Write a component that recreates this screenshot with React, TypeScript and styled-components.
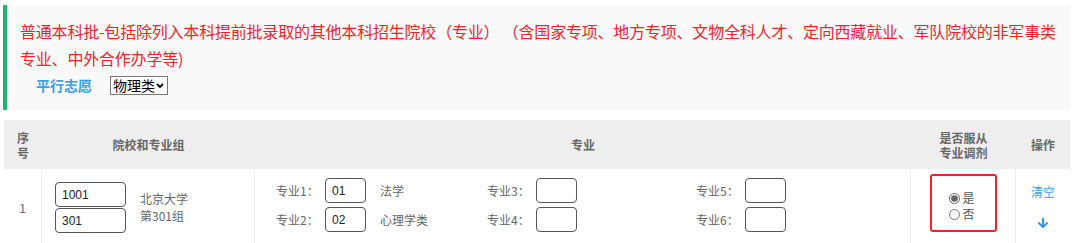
import React from "react";
import styled, { createGlobalStyle } from "styled-components";

const GlobalStyle = createGlobalStyle`
  html, body { margin: 0; padding: 0; background: #fff; }
  body {
    font-family: "Microsoft YaHei", "Noto Sans CJK SC", "Liberation Sans", sans-serif;
    color: #333;
  }
`;

const Page = styled.div`
  width: 1080px;
  padding: 5px 10px 0 3px;
  box-sizing: border-box;
`;

const Notice = styled.div`
  background: #f9f9f9;
  border-left: 4px solid #1fb574;
  padding: 13px 8px 0 13px;
  height: 105px;
  box-sizing: border-box;
`;

const Title = styled.div`
  color: #e8262c;
  font-size: 16px;
  line-height: 27px;
  letter-spacing: -0.2px;
  white-space: nowrap;
`;

const ModeRow = styled.div`
  display: flex;
  align-items: center;
  gap: 18px;
  padding-left: 16px;
  margin-top: 1px;
  height: 24px;
`;

const ModeLabel = styled.span`
  color: #3c9ee6;
  font-weight: bold;
  font-size: 14px;
`;

const SelectWrap = styled.div`
  position: relative;
  display: inline-flex;
`;

const Select = styled.select`
  appearance: none;
  -webkit-appearance: none;
  font-family: "Noto Sans CJK SC", sans-serif;
  font-size: 14px;
  width: 58px;
  height: 19px;
  padding: 0 0 0 2px;
  border: 1px solid #767676;
  border-radius: 0;
  background: #fff;
  color: #000;
  line-height: 17px;
  outline: none;
`;

const Chevron = styled.svg`
  position: absolute;
  right: 4px;
  top: 7px;
  pointer-events: none;
`;

const Table = styled.div`
  margin: 10px 0 0 1px;
  width: 1066px;
`;

const cols = "38px 213px 656px 105px 54px";

const HeaderRow = styled.div`
  display: grid;
  grid-template-columns: ${cols};
  height: 49px;
  background: #eeeeee;
`;

const HeadCell = styled.div`
  display: flex;
  align-items: center;
  justify-content: center;
  text-align: center;
  font-size: 12px;
  line-height: 15px;
  font-weight: bold;
  color: #666;
`;

const BodyRow = styled.div`
  display: grid;
  grid-template-columns: ${cols};
  height: 76px;
`;

const Cell = styled.div<{ $divider?: boolean }>`
  display: flex;
  align-items: center;
  border-right: ${(p) => (p.$divider ? "1px solid #ececec" : "none")};
  box-sizing: border-box;
  font-size: 12px;
  color: #666;
`;

const IndexCell = styled(Cell)`
  justify-content: center;
`;

const SchoolCell = styled(Cell)`
  padding-left: 13px;
  gap: 14px;
  padding-top: 1px;
`;

const InputStack = styled.div`
  display: flex;
  flex-direction: column;
  gap: 1px;
`;

const TextInput = styled.input<{ $w: number }>`
  width: ${(p) => p.$w}px;
  height: 25px;
  box-sizing: border-box;
  border: 1px solid #555;
  border-radius: 4px;
  padding: 0 6px;
  font-family: "Liberation Sans", Arial, sans-serif;
  font-size: 12px;
  color: #222;
  background: #fff;
  outline: none;
`;

const SchoolName = styled.div`
  line-height: 17px;
  margin-top: -2px;
`;

const MajorCell = styled(Cell)`
  display: grid;
  grid-template-columns: 211px 209px 200px;
  align-content: center;
  padding-left: 21px;
  padding-bottom: 4px;
`;

const MajorGroup = styled.div`
  display: flex;
  flex-direction: column;
  gap: 4px;
`;

const MajorLine = styled.div`
  display: flex;
  align-items: center;
  height: 25px;
`;

const MajorLabel = styled.span`
  width: 49px;
  flex: none;
`;

const MajorName = styled.span`
  margin-left: 14px;
`;

const AdjustCell = styled(Cell)`
  justify-content: center;
`;

const AdjustBox = styled.div`
  width: 67px;
  height: 58px;
  box-sizing: border-box;
  border: 2px solid #e8262c;
  border-radius: 3px;
  display: flex;
  flex-direction: column;
  justify-content: center;
  align-items: center;
  margin-top: -8px;
  padding-top: 6px;
`;

const RadioLabel = styled.label`
  display: flex;
  align-items: center;
  height: 16px;
  font-size: 12px;
  line-height: 16px;
  color: #555;
  margin-left: -2px;
`;

const Radio = styled.input`
  width: 11px;
  height: 11px;
  margin: 0 2px 0 0;
  accent-color: #666;
`;

const ActionCell = styled(Cell)`
  flex-direction: column;
  justify-content: flex-start;
  padding-top: 14px;
  gap: 17px;
`;

const ClearLink = styled.a`
  color: #3c9ee6;
  font-size: 12px;
  text-decoration: none;
  cursor: pointer;
`;

const ArrowIcon = () => (
  <svg width="12" height="12" viewBox="0 0 448 512" fill="#2f8ee0">
    <path d="M413.1 222.5l22.2 22.2c9.4 9.4 9.4 24.6 0 33.9L241 473c-9.4 9.4-24.6 9.4-33.9 0L12.7 278.6c-9.4-9.4-9.4-24.6 0-33.9l22.2-22.2c9.5-9.5 25-9.3 34.3.4L184 343.4V56c0-13.3 10.7-24 24-24h32c13.3 0 24 10.7 24 24v287.4l114.8-120.5c9.3-9.8 24.8-10 34.3-.4z" />
  </svg>
);

type Major = { label: string; code: string; name: string };

const majors: Major[][] = [
  [
    { label: "专业1：", code: "01", name: "法学" },
    { label: "专业2：", code: "02", name: "心理学类" },
  ],
  [
    { label: "专业3：", code: "", name: "" },
    { label: "专业4：", code: "", name: "" },
  ],
  [
    { label: "专业5：", code: "", name: "" },
    { label: "专业6：", code: "", name: "" },
  ],
];

export default function App() {
  return (
    <>
      <GlobalStyle />
      <Page>
        <Notice>
          <Title>
            普通本科批-包括除列入本科提前批录取的其他本科招生院校（专业） （含国家专项、地方专项、文物全科人才、定向西藏就业、军队院校的非军事类
            <br />
            专业、中外合作办学等)
          </Title>
          <ModeRow>
            <ModeLabel>平行志愿</ModeLabel>
            <SelectWrap>
              <Select defaultValue="物理类">
                <option>物理类</option>
                <option>历史类</option>
              </Select>
              <Chevron width="8" height="6" viewBox="0 0 8 6">
                <path d="M1 1l3 3 3-3" fill="none" stroke="#000" strokeWidth="1.8" />
              </Chevron>
            </SelectWrap>
          </ModeRow>
        </Notice>
        <Table>
          <HeaderRow>
            <HeadCell>
              序<br />号
            </HeadCell>
            <HeadCell>院校和专业组</HeadCell>
            <HeadCell>专业</HeadCell>
            <HeadCell>
              是否服从
              <br />
              专业调剂
            </HeadCell>
            <HeadCell>操作</HeadCell>
          </HeaderRow>
          <BodyRow>
            <IndexCell $divider>1</IndexCell>
            <SchoolCell $divider>
              <InputStack>
                <TextInput $w={71} defaultValue="1001" />
                <TextInput $w={71} defaultValue="301" />
              </InputStack>
              <SchoolName>
                北京大学
                <br />
                第301组
              </SchoolName>
            </SchoolCell>
            <MajorCell $divider>
              {majors.map((group, gi) => (
                <MajorGroup key={gi}>
                  {group.map((m) => (
                    <MajorLine key={m.label}>
                      <MajorLabel>{m.label}</MajorLabel>
                      <TextInput $w={41} defaultValue={m.code} />
                      {m.name && <MajorName>{m.name}</MajorName>}
                    </MajorLine>
                  ))}
                </MajorGroup>
              ))}
            </MajorCell>
            <AdjustCell $divider>
              <AdjustBox>
                <RadioLabel>
                  <Radio type="radio" name="adjust" defaultChecked />是
                </RadioLabel>
                <RadioLabel>
                  <Radio type="radio" name="adjust" />否
                </RadioLabel>
              </AdjustBox>
            </AdjustCell>
            <ActionCell>
              <ClearLink>清空</ClearLink>
              <ArrowIcon />
            </ActionCell>
          </BodyRow>
        </Table>
      </Page>
    </>
  );
}
